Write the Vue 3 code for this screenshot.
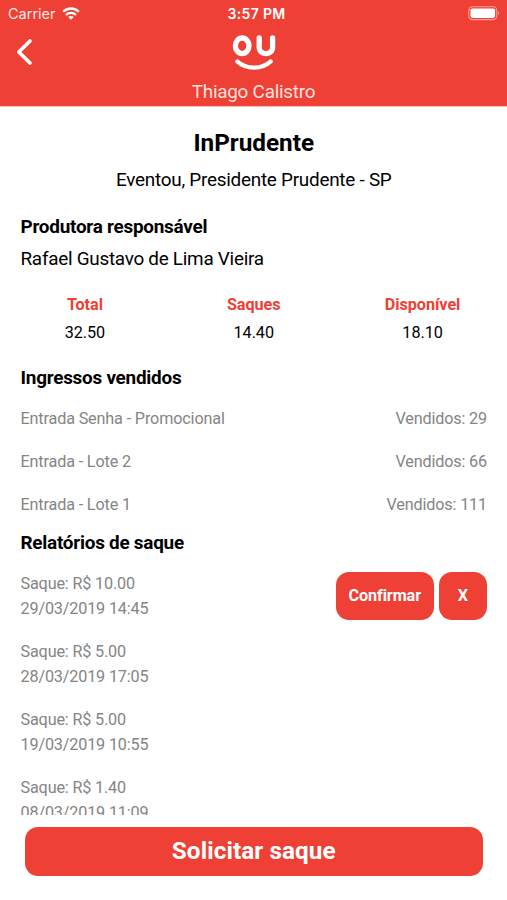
<script setup>
const totals = [
  { label: 'Total', value: '32.50' },
  { label: 'Saques', value: '14.40' },
  { label: 'Disponível', value: '18.10' },
]
const tickets = [
  { name: 'Entrada Senha - Promocional', sold: 29 },
  { name: 'Entrada - Lote 2', sold: 66 },
  { name: 'Entrada - Lote 1', sold: 111 },
]
const withdrawals = [
  { amount: '10.00', date: '29/03/2019 14:45', pending: true },
  { amount: '5.00', date: '28/03/2019 17:05' },
  { amount: '5.00', date: '19/03/2019 10:55' },
  { amount: '1.40', date: '08/03/2019 11:09' },
]
</script>

<template>
  <div class="screen">
    <header class="header">
      <div class="status">
        <div class="carrier">
          <span>Carrier</span>
          <svg class="wifi" width="18" height="14" viewBox="0 0 18 14" fill="none" stroke="#fff" stroke-width="2.3">
            <path d="M1.2 4.8C5.6.4 12.4.4 16.8 4.8" />
            <path d="M4 8C6.8 5.2 11.2 5.2 14 8" />
            <path d="M9 12.8L6.2 10C7.8 8.5 10.2 8.5 11.8 10Z" fill="#fff" stroke="none" />
          </svg>
        </div>
        <span class="clock">3:57 PM</span>
        <svg class="battery" width="33" height="15" viewBox="0 0 33 15">
          <rect x=".8" y=".8" width="28" height="12.8" rx="3.6" fill="none" stroke="#fff" stroke-opacity=".5" stroke-width="1.1" />
          <rect x="2.5" y="2.5" width="24.6" height="9.4" rx="1.8" fill="#fff" />
          <path d="M30.1 5.2Q32 7.2 30.1 9.2Z" fill="#fff" fill-opacity=".55" />
        </svg>
      </div>
      <div class="nav">
        <svg class="back" width="18" height="28" viewBox="0 0 18 28" fill="none" stroke="#fff" stroke-width="3.7" stroke-linecap="round" stroke-linejoin="round">
          <path d="M14 3L2.8 14L14 25" />
        </svg>
        <svg class="logo" width="44" height="37" viewBox="0 0 44 37" fill="none" stroke="#fff" stroke-linecap="round">
          <ellipse cx="10.2" cy="11.8" rx="6.8" ry="7.8" stroke-width="5.3" />
          <path d="M27.2 3.9V13.2C27.2 21.7 40.6 21.7 40.6 13.2V3.9" stroke-width="5.3" />
          <path d="M5.4 27.5C14 35.6 30 35.6 38.6 27.5" stroke-width="4.4" />
        </svg>
        <span class="spacer"></span>
      </div>
      <div class="user">Thiago Calistro</div>
    </header>

    <main class="content">
      <h1>InPrudente</h1>
      <p class="place">Eventou, Presidente Prudente - SP</p>

      <h2 class="producer-title">Produtora responsável</h2>
      <p class="producer">Rafael Gustavo de Lima Vieira</p>

      <div class="totals">
        <div v-for="t in totals" :key="t.label" class="total">
          <strong>{{ t.label }}</strong>
          <span>{{ t.value }}</span>
        </div>
      </div>

      <h2>Ingressos vendidos</h2>
      <div class="tickets">
        <div v-for="t in tickets" :key="t.name" class="ticket">
          <span>{{ t.name }}</span>
          <span>Vendidos: {{ t.sold }}</span>
        </div>
      </div>

      <h2>Relatórios de saque</h2>
      <div class="withdrawals">
        <div v-for="w in withdrawals" :key="w.date" class="withdrawal">
          <div class="info">
            <span>Saque: R$ {{ w.amount }}</span>
            <span>{{ w.date }}</span>
          </div>
          <div v-if="w.pending" class="actions">
            <button class="confirm">Confirmar</button>
            <button class="cancel">X</button>
          </div>
        </div>
      </div>
    </main>

    <footer class="footer">
      <button class="request">Solicitar saque</button>
    </footer>
  </div>
</template>

<style>
body {
  margin: 0;
  background: #fff;
}
</style>

<style scoped>
.screen {
  display: flex;
  flex-direction: column;
  height: 900px;
  overflow: hidden;
  background: #fff;
  color: #000;
  font-family: Roboto, "Liberation Sans", sans-serif;
}
.header {
  flex: none;
  box-sizing: border-box;
  height: 107px;
  background: #ee4035;
  border-bottom: 1px solid #f9c1bd;
  color: #fff;
}
.status {
  display: grid;
  grid-template-columns: 1fr auto 1fr;
  align-items: center;
  height: 27px;
  padding: 0 7px 0 8px;
  font-family: Inter, sans-serif;
  font-size: 14.5px;
}
.carrier {
  display: flex;
  align-items: center;
  gap: 6px;
  color: #ffe9e7;
}
.clock {
  padding-left: 5px;
  font-weight: 600;
  font-size: 14px;
  letter-spacing: 0.35px;
}
.battery {
  justify-self: end;
  margin-right: -1px;
}
.nav {
  display: grid;
  grid-template-columns: 1fr auto 1fr;
  height: 52px;
  padding: 0 14px;
}
.back {
  margin: 11px 0 0 2px;
}
.logo {
  margin-top: 7px;
}
.user {
  height: 26px;
  line-height: 26px;
  text-align: center;
  font-size: 18.9px;
  letter-spacing: -0.25px;
  color: #ffe2df;
}
.content {
  flex: none;
  box-sizing: border-box;
  height: 708px;
  padding: 21px 20px 0 20.5px;
  overflow: hidden;
}
h1,
h2,
p {
  margin: 0;
}
h1 {
  font-size: 24.3px;
  line-height: 30px;
  text-align: center;
}
.place {
  margin-top: 9px;
  font-size: 18.9px;
  letter-spacing: -0.25px;
  line-height: 26px;
  text-align: center;
}
h2 {
  font-size: 18.9px;
  letter-spacing: -0.24px;
  line-height: 26px;
}
.producer-title {
  margin-top: 21px;
}
.producer {
  margin-top: 6px;
  font-size: 18.9px;
  letter-spacing: -0.27px;
  line-height: 26px;
}
.totals {
  display: grid;
  grid-template-columns: repeat(3, 1fr);
  margin: 21px -20px 19px -20px;
  height: 53px;
  font-size: 16.2px;
}
.total {
  display: flex;
  flex-direction: column;
  gap: 4px;
  align-items: center;
  line-height: 24px;
  letter-spacing: -0.05px;
}
.total strong {
  color: #ee4035;
}
.tickets {
  display: flex;
  flex-direction: column;
  gap: 19px;
  padding: 16px 0 13px;
}
.ticket {
  display: flex;
  justify-content: space-between;
  font-size: 16.2px;
  letter-spacing: -0.15px;
  line-height: 24px;
  color: #858585;
}
.withdrawals {
  display: flex;
  flex-direction: column;
  gap: 18px;
  padding-top: 15px;
}
.withdrawal {
  display: flex;
  justify-content: space-between;
  height: 50px;
  font-size: 16.2px;
  letter-spacing: -0.16px;
  line-height: 25px;
  color: #858585;
}
.info {
  display: flex;
  flex-direction: column;
}
.actions {
  display: flex;
  gap: 5px;
}
button {
  padding: 0;
  border: 0;
  background: #ee4035;
  color: #fff;
  font-family: inherit;
  font-weight: 700;
  border-radius: 13px;
}
.confirm,
.cancel {
  height: 48px;
  margin-top: 1px;
  padding-bottom: 1px;
  font-size: 16.2px;
  letter-spacing: -0.1px;
}
.confirm {
  width: 97.5px;
}
.cancel {
  width: 48.5px;
}
.footer {
  flex: none;
  padding: 12px 24.5px 24px 25px;
}
.request {
  display: block;
  width: 100%;
  height: 48.5px;
  padding-bottom: 2px;
  font-size: 24.3px;
  letter-spacing: 0.08px;
}
</style>
